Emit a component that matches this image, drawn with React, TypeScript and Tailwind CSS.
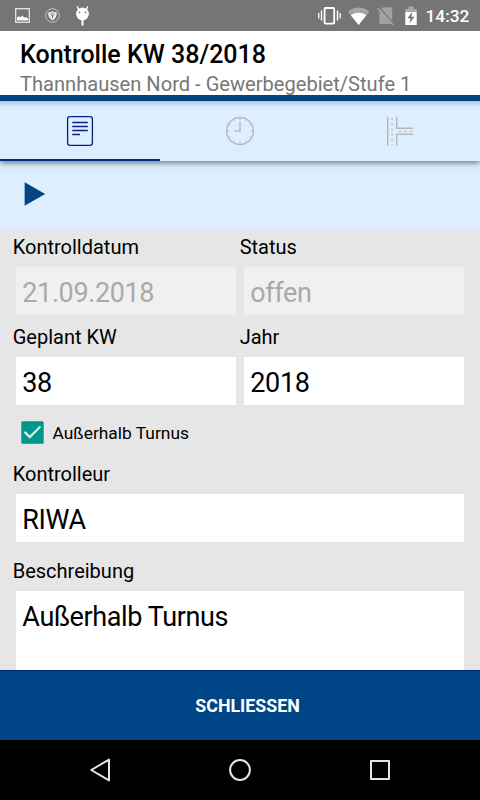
import type { ReactNode } from 'react'

function StatusBar() {
  return (
    <div className="flex h-[31px] items-start justify-between bg-[#757575]">
      <svg width="110" height="31" viewBox="0 0 110 31" fill="none">
        <rect x="15.7" y="8.7" width="13.6" height="13.6" stroke="#e6e6e6" strokeWidth="1.3" />
        <path d="M17 20.5v-3l2-1.2 1.6 1 2-1.8 1.6 2.3 1.8-.8 2 1.5v2z" fill="#fff" />
        <circle cx="52.5" cy="15.5" r="6.8" stroke="#c4c4c4" strokeWidth="1" />
        <path d="M48.2 12.4c1.8 0 3-.4 4.3-1.2 1.3.8 2.5 1.2 4.3 1.2 0 3.8-1.1 6.3-4.3 8-3.2-1.7-4.3-4.2-4.3-8z" fill="#ececec" />
        <circle cx="52.5" cy="14.4" r="1.3" stroke="#757575" strokeWidth=".9" />
        <path d="M52.5 15.6v2.6" stroke="#757575" strokeWidth="1" />
        <circle cx="82.5" cy="14" r="6.4" fill="#fff" />
        <path d="M78.8 10 77.4 6.8M86.2 10l1.4-3.2" stroke="#fff" strokeWidth="1.4" strokeLinecap="round" />
        <path d="M82.5 20v4.8" stroke="#fff" strokeWidth="2" strokeLinecap="round" />
        <circle cx="79.5" cy="12.3" r=".9" fill="#757575" />
        <circle cx="85.5" cy="12.3" r=".9" fill="#757575" />
      </svg>
      <div className="flex">
        <svg width="105" height="31" viewBox="315 0 105 31" fill="none">
          <rect x="324.6" y="8" width="9.6" height="15.6" rx=".8" stroke="#fff" strokeWidth="1.8" />
          <path d="M321.5 10.5v10M337.5 10.5v10" stroke="#fff" strokeWidth="1.4" />
          <path d="M318.8 13v5.5M340.2 13v5.5" stroke="#fff" strokeWidth="1.3" />
          <path d="M347.7 11.4c6.4-5.2 15.4-5.2 21.8 0L358.6 25z" fill="#a4a4a4" />
          <path d="M350.8 15.2c4.8-3.3 10.8-3.3 15.6 0L358.6 25z" fill="#fff" />
          <path d="M379.5 9.8 383.2 7.3H391a1.2 1.2 0 0 1 1.2 1.2V24h-13z" fill="#a0a0a0" />
          <path d="m379 7.5 15.2 17" stroke="#757575" strokeWidth="1.6" />
          <path d="m377.8 8.2 15.4 16.6" stroke="#a8a8a8" strokeWidth="1.5" />
          <path d="M408.5 6.5h5V9h3.2v3.5h-11.4V9h3.2z" fill="#a8a8a8" />
          <path d="M405.3 12h11.4v13h-11.4z" fill="#fff" />
          <path d="m412.3 11.8-4.8 6.5h3l-1 5 5-6.6h-3.1z" fill="#757575" />
        </svg>
        <span className="w-[60px] pl-[5.5px] pt-[6px] text-[17.3px] font-medium leading-5 text-white">14:32</span>
      </div>
    </div>
  )
}

function Tabs() {
  return (
    <div className="relative z-10 grid h-[60px] grid-cols-3 bg-[#ddefff] bg-[linear-gradient(to_bottom,#b3c2d8,#ddefff_6px)] shadow-[0_2px_6px_rgba(0,0,0,0.5)]">
      <div className="flex items-center justify-center border-b-2 border-[#002c80]">
        <svg className="mt-[2px]" width="28" height="32" viewBox="66 115 28 32" fill="none" stroke="#07207c">
          <rect x="67.6" y="116.7" width="24.8" height="28.6" rx="2.6" strokeWidth="1.3" />
          <path d="M72.3 122.5h15.5M72.3 126.5h15.5M72.3 130.5h15.5M72.3 134.5h7.7" strokeWidth="1.4" />
        </svg>
      </div>
      <div className="flex items-center justify-center">
        <svg width="30" height="30" viewBox="225 116 30 30" fill="none" stroke="#b8bbbd">
          <circle cx="240" cy="131" r="13.4" strokeWidth="1.5" />
          <path d="M240 122v9h-5.3" strokeWidth="1.5" />
          <path d="M240 118v2.5M240 141.5v2.5M227 131h2.5M250.5 131h2.5M233.5 119.7l.8 1.5M246.5 119.7l-.8 1.5M233.5 142.3l.8-1.5M246.5 142.3l-.8-1.5M228.7 124.5l1.5.8M251.3 124.5l-1.5.8M228.7 137.5l1.5-.8M251.3 137.5l-1.5-.8" strokeWidth="1" />
        </svg>
      </div>
      <div className="flex items-center justify-center">
        <svg width="30" height="30" viewBox="385 116 30 30" fill="none" stroke="#b8b8b8">
          <path d="M387.7 116.8v28.8M396.7 116.8v11.4h16.4M396.7 145.6v-11.3h16.4" strokeWidth="1.5" />
          <path d="M392.1 118v27" strokeWidth="1.4" strokeDasharray="2 3.2" />
          <path d="M398.3 131.4h14" strokeWidth="1" strokeDasharray="3 2.6" />
        </svg>
      </div>
    </div>
  )
}

function Label({ children }: { children: ReactNode }) {
  return <div className="h-6 text-[20px] leading-6">{children}</div>
}

function Field({ value, disabled }: { value: string; disabled?: boolean }) {
  return (
    <div className={`h-12 px-[6.3px] text-[27px] leading-[52px] tracking-[-0.38px] ${disabled ? 'bg-[#f0f0f0] text-[#a9a9a9]' : 'bg-white'}`}>
      {value}
    </div>
  )
}

function FieldPair({ left, right, disabled }: { left: string[]; right: string[]; disabled?: boolean }) {
  return (
    <div className="h-[90px]">
      <div className="grid grid-cols-[227px_1fr] pl-[12.7px] pt-[6px]">
        <Label>{left[0]}</Label>
        <Label>{right[0]}</Label>
      </div>
      <div className="mt-2 grid grid-cols-2 gap-2 px-4">
        <Field value={left[1]} disabled={disabled} />
        <Field value={right[1]} disabled={disabled} />
      </div>
    </div>
  )
}

function App() {
  return (
    <div className="flex h-[800px] w-[480px] flex-col overflow-hidden font-['Roboto',sans-serif] text-black">
      <StatusBar />
      <header className="h-[70px] border-b-[6px] border-[#004686] bg-white pl-5 pt-[9px]">
        <h1 className="text-[25px] font-medium leading-[30px]">Kontrolle KW 38/2018</h1>
        <p className="mt-[2px] text-[20.1px] leading-6 text-[#777]">Thannhausen Nord - Gewerbegebiet/Stufe 1</p>
      </header>
      <Tabs />
      <div className="h-[68px] bg-[#ddefff] pl-6 pt-[21px]">
        <svg width="22" height="24" viewBox="0 0 22 24">
          <path d="M.6.2 21.2 12 .6 23.8z" fill="#004686" />
        </svg>
      </div>

      <main className="flex-1 overflow-hidden bg-[#e6e6e6]">
        <FieldPair left={['Kontrolldatum', '21.09.2018']} right={['Status', 'offen']} disabled />
        <FieldPair left={['Geplant KW', '38']} right={['Jahr', '2018']} />
        <div className="flex items-center gap-[8.5px] pl-[21px] pt-3">
          <svg width="23" height="23" viewBox="0 0 23 23" fill="none">
            <rect x=".3" y=".3" width="22.4" height="22.4" rx="1.5" fill="#009688" />
            <path d="m3.6 10.9 5.2 5.2L19.4 5.5" stroke="#e6e6e6" strokeWidth="2.2" />
          </svg>
          <span className="text-[17.4px] leading-5">Außerhalb Turnus</span>
        </div>
        <div className="mt-[18px] pl-[12.7px]">
          <Label>Kontrolleur</Label>
        </div>
        <div className="mt-2 px-4">
          <Field value="RIWA" />
        </div>
        <div className="mt-[17px] pl-[12.7px]">
          <Label>Beschreibung</Label>
        </div>
        <div className="mx-4 mt-2 h-20 bg-white px-[6.3px] text-[27px] leading-[52px] tracking-[-0.38px]">Außerhalb Turnus</div>
      </main>

      <button className="h-[70px] border-t border-[#00286e] bg-[#004686] pl-[15px] pt-px text-[17.8px] font-bold text-white">
        SCHLIESSEN
      </button>
      <nav className="flex h-[60px] items-center justify-between bg-black px-[88px]">
        <svg width="24" height="26" viewBox="0 0 24 26" fill="none" stroke="#e4e4e4" strokeWidth="2" strokeLinejoin="round">
          <path d="M21 2.6v20.8L3.2 13z" />
        </svg>
        <svg width="24" height="24" viewBox="0 0 24 24" fill="none" stroke="#e4e4e4" strokeWidth="2">
          <circle cx="12" cy="12" r="9.9" />
        </svg>
        <svg width="24" height="24" viewBox="0 0 24 24" fill="none" stroke="#e4e4e4" strokeWidth="2" strokeLinejoin="round">
          <path d="M3 3h18v18H3z" />
        </svg>
      </nav>
    </div>
  )
}

export default App
